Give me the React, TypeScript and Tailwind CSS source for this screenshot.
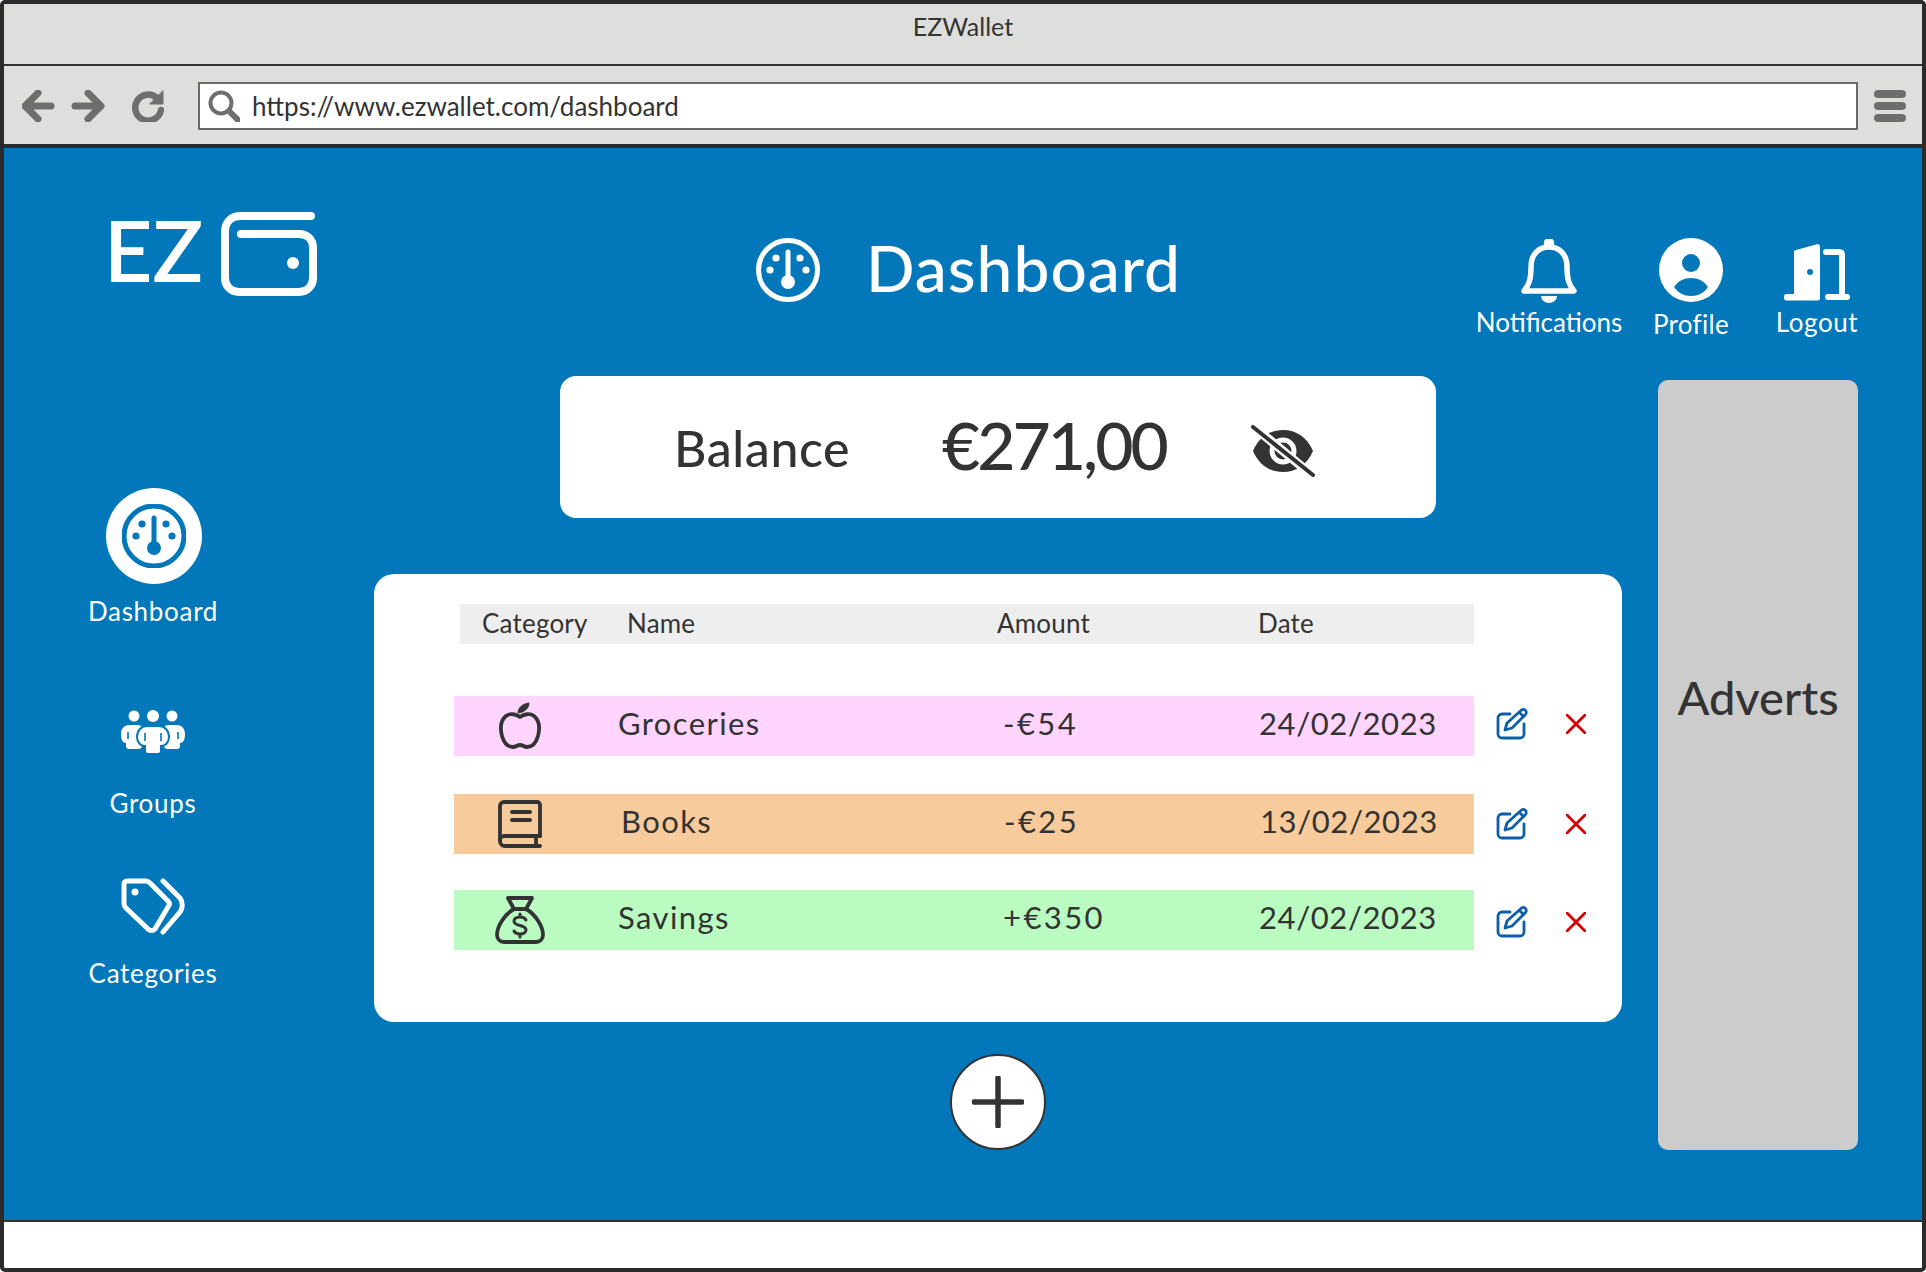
const font = "font-['Lato','Liberation_Sans',sans-serif]";

function Gauge({ className, fg, ring }: { className?: string; fg: string; ring: number }) {
  return (
    <svg viewBox="0 0 64 64" className={className} fill="none">
      <circle cx="32" cy="32" r={ring} stroke={fg} strokeWidth="5" />
      <circle cx="20" cy="20" r="3.6" fill={fg} />
      <circle cx="44" cy="20" r="3.6" fill={fg} />
      <circle cx="14" cy="32" r="3.6" fill={fg} />
      <circle cx="50" cy="32" r="3.6" fill={fg} />
      <path d="M32 14v30" stroke={fg} strokeWidth="5" strokeLinecap="round" />
      <circle cx="32" cy="44" r="7" fill={fg} />
    </svg>
  );
}

function EditIcon() {
  return (
    <svg viewBox="0 0 32 32" className="w-8 h-8" fill="none" stroke="#0b5ea8" strokeWidth="2.8" strokeLinecap="round" strokeLinejoin="round">
      <path d="M14 6H6a4 4 0 0 0-4 4v16a4 4 0 0 0 4 4h18a4 4 0 0 0 4-4v-10" />
      <path d="M9 22l2-7L25 2.5a3 3 0 0 1 4.5 4L16 20z" />
      <path d="M23.5 4.5l4 4" />
    </svg>
  );
}

function CloseIcon() {
  return (
    <svg viewBox="0 0 20 20" className="w-5 h-5" fill="none" stroke="#d40000" strokeWidth="2.8" strokeLinecap="round">
      <path d="M1 1l18 18M19 1L1 19" />
    </svg>
  );
}

function AppleIcon() {
  return (
    <svg viewBox="0 0 44 48" className="w-[44px] h-[48px]" fill="none" stroke="#333" strokeWidth="3.8" strokeLinejoin="round">
      <path d="M22 15c-4-3-10-4-14-1C3 18 2 26 4 34c2 7 6 11 11 11 3 0 4-2 7-2s4 2 7 2c5 0 9-4 11-11 2-8 1-16-4-20-4-3-10-2-14 1z" />
      <path d="M20 11c0-5 4-9 11-10 0 5-4 9-11 10z" fill="#333" strokeWidth="1" />
    </svg>
  );
}

function BookIcon() {
  return (
    <svg viewBox="0 0 44 48" className="w-[44px] h-[48px]" fill="none" stroke="#333" strokeWidth="3.8" strokeLinecap="round" strokeLinejoin="round">
      <path d="M42 36V5a3 3 0 0 0-3-3H6a4 4 0 0 0-4 4v35a5 5 0 0 0 5 5h35" />
      <path d="M2 40a4 4 0 0 1 4-4h36" />
      <path d="M38 36v10" />
      <path d="M14 12h18M14 20h18" strokeWidth="4" />
    </svg>
  );
}

function MoneyBagIcon() {
  return (
    <svg viewBox="0 0 50 48" className="w-[50px] h-[48px]" fill="none" stroke="#333" strokeWidth="3.8" strokeLinecap="round" strokeLinejoin="round">
      <path d="M13 2h24l-6 11H19z" />
      <path d="M19 13C10 18 2 30 2 39c0 4 3 7 7 7h32c4 0 7-3 7-7 0-9-8-21-17-26" />
      <path d="M31 24c-1-2-3-3-6-3-4 0-6 2-6 4 0 6 12 3 12 9 0 2-2 4-6 4-3 0-5-1-6-3M25 18v3M25 38v3" strokeWidth="3" />
    </svg>
  );
}

const rows = [
  {
    bg: "bg-[#ffd5ff]",
    icon: <AppleIcon />,
    name: "Groceries",
    amount: "-€54",
    date: "24/02/2023",
    nameCls: "w-[386px] pl-[1px]",
    cls: "mt-[52px]",
    actionCls: "mt-[-4px]",
  },
  {
    bg: "bg-[#f8cb9c]",
    icon: <BookIcon />,
    name: "Books",
    amount: "-€25",
    date: "13/02/2023",
    nameCls: "w-[387px] pl-[4px]",
    cls: "mt-[38px]",
    actionCls: "mt-0",
  },
  {
    bg: "bg-[#b9fbc0]",
    icon: <MoneyBagIcon />,
    name: "Savings",
    amount: "+€350",
    date: "24/02/2023",
    nameCls: "w-[386px] pl-[1px]",
    cls: "mt-[36px]",
    actionCls: "mt-[4px]",
  },
];

function Toolbar() {
  return (
    <div className="h-[82px] bg-[#dededc] border-b-[4px] border-[#2b2b2b] flex items-center pt-[2px]">
      <svg viewBox="0 0 142 32" className="w-[142px] h-8 ml-[18px]" fill="none" stroke="#6e6e6e" strokeLinecap="round" strokeLinejoin="round">
        <path d="M29 16H5M16 3L3 16l13 13" strokeWidth="7" />
        <path d="M53 16h24M66 3l13 13-13 13" strokeWidth="7" />
        <path d="M135 8a13 13 0 1 0 4 12" strokeWidth="6.5" />
        <path d="M141 1v13h-13z" fill="#6e6e6e" strokeWidth="1" />
      </svg>
      <div className="ml-[34px] w-[1660px] h-12 bg-white border-2 border-[#6a6a6a] flex items-center">
        <svg viewBox="0 0 32 32" className="w-8 h-8 ml-2" fill="none" stroke="#6e6e6e" strokeLinecap="round">
          <circle cx="13" cy="13" r="10.5" strokeWidth="4" />
          <path d="M21 21l9 9" strokeWidth="6" />
        </svg>
        <span className="ml-[12px] text-[26px] leading-none text-[#333]">https://www.ezwallet.com/dashboard</span>
      </div>
      <div className="ml-4 w-8 flex flex-col gap-1">
        <div className="h-2 rounded-full bg-[#6e6e6e]" />
        <div className="h-2 rounded-full bg-[#6e6e6e]" />
        <div className="h-2 rounded-full bg-[#6e6e6e]" />
      </div>
    </div>
  );
}

function Header() {
  return (
    <div className="h-[228px] flex items-start text-white">
      <div className="w-[752px] pl-[100px] pt-[64px] flex items-start">
        <span className="text-[84px] leading-[80px] font-semibold mt-[-2px] w-[117px]">EZ</span>
        <svg viewBox="0 0 96 84" className="w-[96px] h-[84px]" fill="none" stroke="#fff" strokeWidth="8" strokeLinecap="round" strokeLinejoin="round">
          <path d="M90 4H20C10 4 4 10 4 20v46c0 8 6 14 14 14h60c8 0 14-6 14-14V36c0-9-6-14-14-14H20" />
          <circle cx="72" cy="51" r="6" fill="#fff" stroke="none" />
        </svg>
      </div>
      <div className="w-[110px] pt-[90px]">
        <Gauge className="w-16 h-16" fg="#fff" ring={29.5} />
      </div>
      <div className="w-[611px] pt-[83px] text-[64px] leading-[74px] font-medium tracking-[1px]">Dashboard</div>
      <div className="w-[144px] pt-[91px] flex flex-col items-center">
        <svg viewBox="0 0 56 64" className="w-14 h-16" fill="none" stroke="#fff" strokeWidth="5.5" strokeLinecap="round" strokeLinejoin="round">
          <path d="M3 52c5-6 7-12 7-24 0-13 8-20 18-20s18 7 18 20c0 12 2 18 7 24z" />
          <circle cx="28" cy="4" r="2.5" fill="#fff" />
          <path d="M20 57h16c0 4-4 7-8 7s-8-3-8-7z" fill="#fff" stroke="none" />
        </svg>
        <span className="mt-[3px] text-[26px] leading-[32px]">Notifications</span>
      </div>
      <div className="w-[140px] pt-[90px] flex flex-col items-center">
        <svg viewBox="0 0 64 64" className="w-16 h-16">
          <circle cx="32" cy="32" r="32" fill="#fff" />
          <circle cx="32" cy="25" r="9" fill="#0277ba" />
          <path d="M15 49c4-6 10-9 17-9s13 3 17 9c-4 6-10 9-17 9s-13-3-17-9z" fill="#0277ba" />
        </svg>
        <span className="mt-[6px] text-[26px] leading-[32px] tracking-[0.3px]">Profile</span>
      </div>
      <div className="w-[112px] pt-[95px] flex flex-col items-center">
        <svg viewBox="0 0 66 58" className="w-[66px] h-[58px]" fill="none">
          <path d="M10 9a2 2 0 0 1 2-2l22-6a3 3 0 0 1 2 3v48H10z" fill="#fff" />
          <rect x="0" y="51" width="36" height="6.5" rx="2.5" fill="#fff" />
          <circle cx="26" cy="29" r="3" fill="#0277ba" />
          <path d="M42 9h13c2 0 3 1 3 3v42M44 54h19" stroke="#fff" strokeWidth="6" strokeLinecap="round" />
        </svg>
        <span className="mt-[5px] text-[26px] leading-[32px] tracking-[0.6px]">Logout</span>
      </div>
    </div>
  );
}

function Sidebar() {
  return (
    <div className="w-[370px] text-white">
      <div className="w-[298px] pt-[112px] flex flex-col items-center">
        <div className="ml-[2px] w-24 h-24 rounded-full bg-white flex items-center justify-center">
          <Gauge className="w-16 h-16" fg="#0277ba" ring={30} />
        </div>
        <span className="mt-[11px] text-[26px] leading-[32px] tracking-[0.7px]">Dashboard</span>
        <svg viewBox="0 0 64 44" className="mt-[83px] w-16 h-[44px]" fill="#fff">
          <circle cx="13" cy="6" r="5.5" />
          <circle cx="32" cy="6" r="6" />
          <circle cx="51" cy="6" r="5.5" />
          <path d="M8 15h8c3 0 5 1 5 3v18c0 2-2 3-4 3H8c-2 0-3-1-3-3v-3c-3 0-5-3-5-9 0-5 3-9 8-9z" />
          <path d="M56 15h-8c-3 0-5 1-5 3v18c0 2 2 3 4 3h9c2 0 3-1 3-3v-3c3 0 5-3 5-9 0-5-3-9-8-9z" />
          <path d="M26 16h12c6 0 10 5 10 11s-4 9-8 9v5c0 2-1 3-3 3H27c-2 0-3-1-3-3v-5c-4 0-8-3-8-9s4-11 10-11z" stroke="#0277ba" strokeWidth="2" />
          <path d="M7 22v7M57 22v7M24 23v8M40 23v8" stroke="#0277ba" strokeWidth="1.6" fill="none" />
        </svg>
        <span className="mt-[33px] text-[26px] leading-[32px] tracking-[0.7px]">Groups</span>
        <svg viewBox="0 0 64 58" className="mt-[59px] w-16 h-[58px]" fill="none" stroke="#fff" strokeWidth="5" strokeLinecap="round" strokeLinejoin="round">
          <path d="M3 6a3 3 0 0 1 3-3h19c2 0 3 1 4 2l18 18c2 2 2 4 0 6L34 51c-2 2-5 2-7 0L5 30c-1-1-2-2-2-4z" />
          <circle cx="14" cy="14" r="3.5" fill="#fff" stroke="none" />
          <path d="M42 3l17 17c3 4 3 10 0 14L42 54" />
        </svg>
        <span className="mt-[21px] text-[26px] leading-[32px] tracking-[0.7px]">Categories</span>
      </div>
    </div>
  );
}

function TableCard() {
  return (
    <div className="mt-[56px] h-[448px] rounded-[20px] bg-white pt-[30px] pl-[80px] text-[#333]">
      <div className="ml-[6px] w-[1014px] h-10 bg-[#eeeeee] flex items-center text-[26px] tracking-[0.2px] pb-[2px]">
        <span className="w-[167px] pl-[22px]">Category</span>
        <span className="w-[370px]">Name</span>
        <span className="w-[261px]">Amount</span>
        <span>Date</span>
      </div>
      {rows.map((row) => (
        <div key={row.name} className={`flex items-center ${row.cls}`}>
          <div className={`w-[1020px] h-[60px] flex items-center text-[31px] tracking-[0.6px] ${row.bg}`}>
            <div className="w-[163px] pr-[32px] flex justify-center">{row.icon}</div>
            <span className={`mt-[-6px] tracking-[1.4px] ${row.nameCls}`}>{row.name}</span>
            <span className="mt-[-6px] w-[256px] tracking-[2.4px]">{row.amount}</span>
            <span className="mt-[-6px]">{row.date}</span>
          </div>
          <div className={`ml-[22px] ${row.actionCls}`}><EditIcon /></div>
          <div className={`ml-[38px] ${row.actionCls}`}><CloseIcon /></div>
        </div>
      ))}
    </div>
  );
}

export default function App() {
  return (
    <div className={`w-[1926px] h-[1272px] border-4 border-[#2b2b2b] rounded-[5px] bg-white overflow-hidden ${font}`}>
      <div className="h-[62px] bg-[#dededc] border-b-[2px] border-[#333] pb-[14px] flex items-center justify-center text-[25px] text-[#333]">
        EZWallet
      </div>
      <Toolbar />
      <div className="h-[1072px] bg-[#0277ba]">
        <Header />
        <div className="flex items-start">
          <Sidebar />
          <div className="w-[1248px]">
            <div className="ml-[186px] w-[876px] h-[142px] rounded-[16px] bg-white flex items-center text-[#333]">
              <span className="ml-[114px] w-[268px] text-[50px] font-medium tracking-[0.6px] mt-[2px]">Balance</span>
              <span className="w-[308px] text-[66px] font-medium tracking-[-3px] mt-[-6px]">€271,00</span>
              <svg viewBox="0 0 66 52" className="w-[66px] h-[52px] mt-[8px]" fill="none">
                <path d="M3 26C9 12 20 5 33 5s24 7 30 21c-6 14-17 21-30 21S9 40 3 26z" fill="#333" />
                <circle cx="33" cy="26" r="11" fill="none" stroke="#fff" strokeWidth="5" />
                <path d="M3 1l60 50" stroke="#fff" strokeWidth="9" />
                <path d="M3 2l60 48" stroke="#333" strokeWidth="4" strokeLinecap="round" />
              </svg>
            </div>
            <TableCard />
            <div className="mt-[32px] mx-auto w-24 h-24 rounded-full bg-white border-2 border-[#333] flex items-center justify-center">
              <svg viewBox="0 0 52 52" className="w-[52px] h-[52px]" fill="none" stroke="#333" strokeWidth="5.5" strokeLinecap="round">
                <path d="M26 2v48M2 26h48" />
              </svg>
            </div>
          </div>
          <div className="ml-[36px] mt-1 w-[200px] h-[770px] rounded-[10px] bg-[#cccccc] pt-[289px] text-center text-[47px] leading-[56px] font-medium text-[#333]">
            Adverts
          </div>
        </div>
      </div>
      <div className="h-[2px] bg-[#333]" />
    </div>
  );
}
